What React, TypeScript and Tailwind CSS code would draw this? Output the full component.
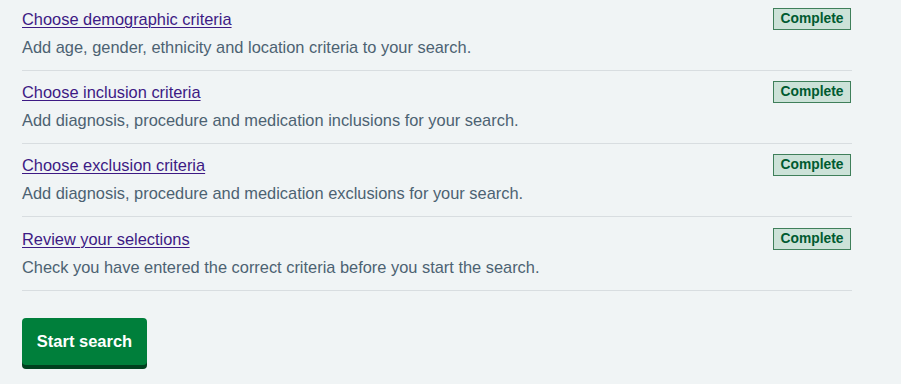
import React from "react";

const rows = [
  {
    title: "Choose demographic criteria",
    desc: "Add age, gender, ethnicity and location criteria to your search.",
  },
  {
    title: "Choose inclusion criteria",
    desc: "Add diagnosis, procedure and medication inclusions for your search.",
  },
  {
    title: "Choose exclusion criteria",
    desc: "Add diagnosis, procedure and medication exclusions for your search.",
  },
  {
    title: "Review your selections",
    desc: "Check you have entered the correct criteria before you start the search.",
  },
];

const pads = ["pt-[7px]", "pt-[9px]", "pt-[9px]", "pt-[10px]"];

export default function App() {
  return (
    <div
      className="w-[901px] h-[384px] bg-[#f0f4f5] pl-[22px] overflow-hidden"
      style={{ fontFamily: '"Liberation Sans", Arial, sans-serif' }}
    >
      <ul className="w-[830px]">
        {rows.map((r, i) => (
          <li key={r.title} className={`border-b border-[#d8dde0] pb-[11px] ${pads[i]}`}>
            <div className="flex items-center justify-between h-[24px]">
              <a
                href="#"
                className="text-[16.4px] leading-[24px] text-[#3d1a84] underline underline-offset-[2px] decoration-1"
              >
                {r.title}
              </a>
              <span className="h-[22px] w-[78px] flex items-center justify-center bg-[#cce2d8] border border-[#3f7f5a] text-[#005a30] text-[13.8px] font-bold leading-none mr-px">
                Complete
              </span>
            </div>
            <p className="mt-[4px] text-[16.4px] leading-[24px] text-[#4c6272]">{r.desc}</p>
          </li>
        ))}
      </ul>
      <button className="mt-[27px] w-[125px] h-[47px] bg-[#007f3b] text-white font-bold text-[16.5px] rounded-[4px] shadow-[0_4px_0_#00401e]">
        Start search
      </button>
    </div>
  );
}
